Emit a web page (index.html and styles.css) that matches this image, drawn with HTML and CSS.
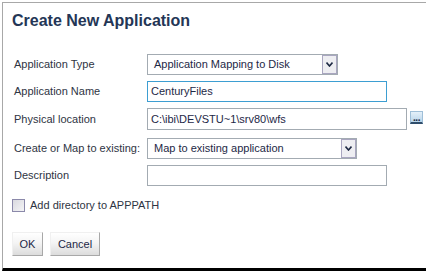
FILE: index.html
```html
<!DOCTYPE html>
<html>
<head>
<meta charset="utf-8">
<link rel="stylesheet" href="styles.css">
</head>
<body>
<div class="window">
  <h1 class="title">Create New Application</h1>
  <div class="form">
    <div class="row row-first">
      <span class="label">Application Type</span>
      <div class="select select-type">
        <span class="select-text">Application Mapping to Disk</span>
        <span class="arrow"><svg width="7" height="5" viewBox="0 0 7 5"><path d="M0.5 0.5 L3.5 4 L6.5 0.5" fill="none" stroke="#1e2a44" stroke-width="1.6"/></svg></span>
      </div>
    </div>
    <div class="row">
      <span class="label">Application Name</span>
      <div class="input input-name focused">CenturyFiles</div>
    </div>
    <div class="row row-tall">
      <span class="label">Physical location</span>
      <div class="input input-path">C:\ibi\DEVSTU~1\srv80\wfs</div>
      <span class="browse"><span class="dots">...</span></span>
    </div>
    <div class="row row-gap">
      <span class="label">Create or Map to existing:</span>
      <div class="select select-map">
        <span class="select-text">Map to existing application</span>
        <span class="arrow"><svg width="7" height="5" viewBox="0 0 7 5"><path d="M0.5 0.5 L3.5 4 L6.5 0.5" fill="none" stroke="#1e2a44" stroke-width="1.6"/></svg></span>
      </div>
    </div>
    <div class="row">
      <span class="label">Description</span>
      <div class="input input-desc"></div>
    </div>
  </div>
  <div class="check">
    <span class="box"></span>
    <span class="check-label">Add directory to APPPATH</span>
  </div>
  <div class="buttons">
    <span class="btn btn-ok">OK</span>
    <span class="btn btn-cancel">Cancel</span>
  </div>
</div>
</body>
</html>
```
FILE: styles.css
```css
html, body {
  margin: 0;
  padding: 0;
  background: #ffffff;
}
body {
  font-family: "Liberation Sans", Arial, sans-serif;
  font-size: 11px;
  color: #2e3340;
}
.window {
  margin: 2px 0 0 2px;
  width: 419px;
  height: 265px;
  border-top: 1px solid #a8a8a8;
  border-left: 1px solid #a8a8a8;
  border-right: 3px solid #000000;
  border-bottom: 3px solid #000000;
  padding: 0 0 0 11px;
  box-sizing: content-box;
  background: #ffffff;
}
.title {
  margin: 8px 0 0 -2px;
  font-size: 16px;
  line-height: 20px;
  font-weight: bold;
  color: #243656;
}
.form {
  margin-top: 23px;
  display: flex;
  flex-direction: column;
  gap: 6px;
}
.row {
  display: flex;
  align-items: center;
  height: 21px;
}
.row-tall {
  height: 22px;
}
.row-gap {
  margin-top: 2px;
}
.label {
  width: 133px;
  flex: none;
  line-height: 13px;
  color: #2e3443;
}
.select, .input {
  box-sizing: border-box;
  height: 21px;
  border: 1px solid #a3abb2;
  background: #ffffff;
  display: flex;
  align-items: center;
  color: #1d2846;
  line-height: 13px;
}
.select-type { width: 191px; }
.select-map { width: 210px; }
.select-text {
  flex: 1;
  padding-left: 6px;
}
.arrow {
  width: 15px;
  height: 19px;
  box-sizing: border-box;
  border: 1px solid #a9a6c0;
  background: #eeeef2;
  display: flex;
  align-items: center;
  justify-content: center;
}
.input {
  padding-left: 3px;
}
.input-name {
  width: 240px;
  border-color: #3d9ed2;
}
.input-path {
  width: 260px;
  height: 22px;
}
.input-desc { width: 240px; }
.browse {
  margin-left: 3px;
  width: 13px;
  height: 13px;
  box-sizing: border-box;
  background: linear-gradient(#e4f0f9, #b9d5ea);
  border: 1px solid #9fbfd8;
  border-bottom: 2px solid #2f4d6b;
  display: flex;
  align-items: flex-end;
  justify-content: center;
  position: relative;
  top: -2px;
}
.dots {
  font-size: 10px;
  line-height: 8px;
  color: #1a2740;
  font-weight: bold;
  letter-spacing: -0.5px;
}
.check {
  margin-top: 13px;
  margin-left: -2px;
  display: flex;
  align-items: center;
  height: 13px;
}
.box {
  width: 13px;
  height: 13px;
  box-sizing: border-box;
  border: 1px solid #8b89aa;
  background: linear-gradient(135deg, #d9d9df, #f4f4f6);
  flex: none;
}
.check-label {
  margin-left: 5px;
  color: #2e3443;
  line-height: 13px;
}
.buttons {
  margin-top: 20px;
  margin-left: -2px;
  display: flex;
  gap: 7px;
}
.btn {
  height: 24px;
  box-sizing: border-box;
  display: flex;
  align-items: center;
  justify-content: center;
  background: linear-gradient(#ffffff 0%, #f4f4f4 45%, #dcdcdc 100%);
  border-top: 1px solid #f0f0f0;
  border-left: 1px solid #f0f0f0;
  border-right: 1px solid #a8a8a8;
  border-bottom: 1px solid #a8a8a8;
  color: #1d2846;
  line-height: 13px;
}
.btn-ok { width: 31px; }
.btn-cancel { width: 50px; }
```
